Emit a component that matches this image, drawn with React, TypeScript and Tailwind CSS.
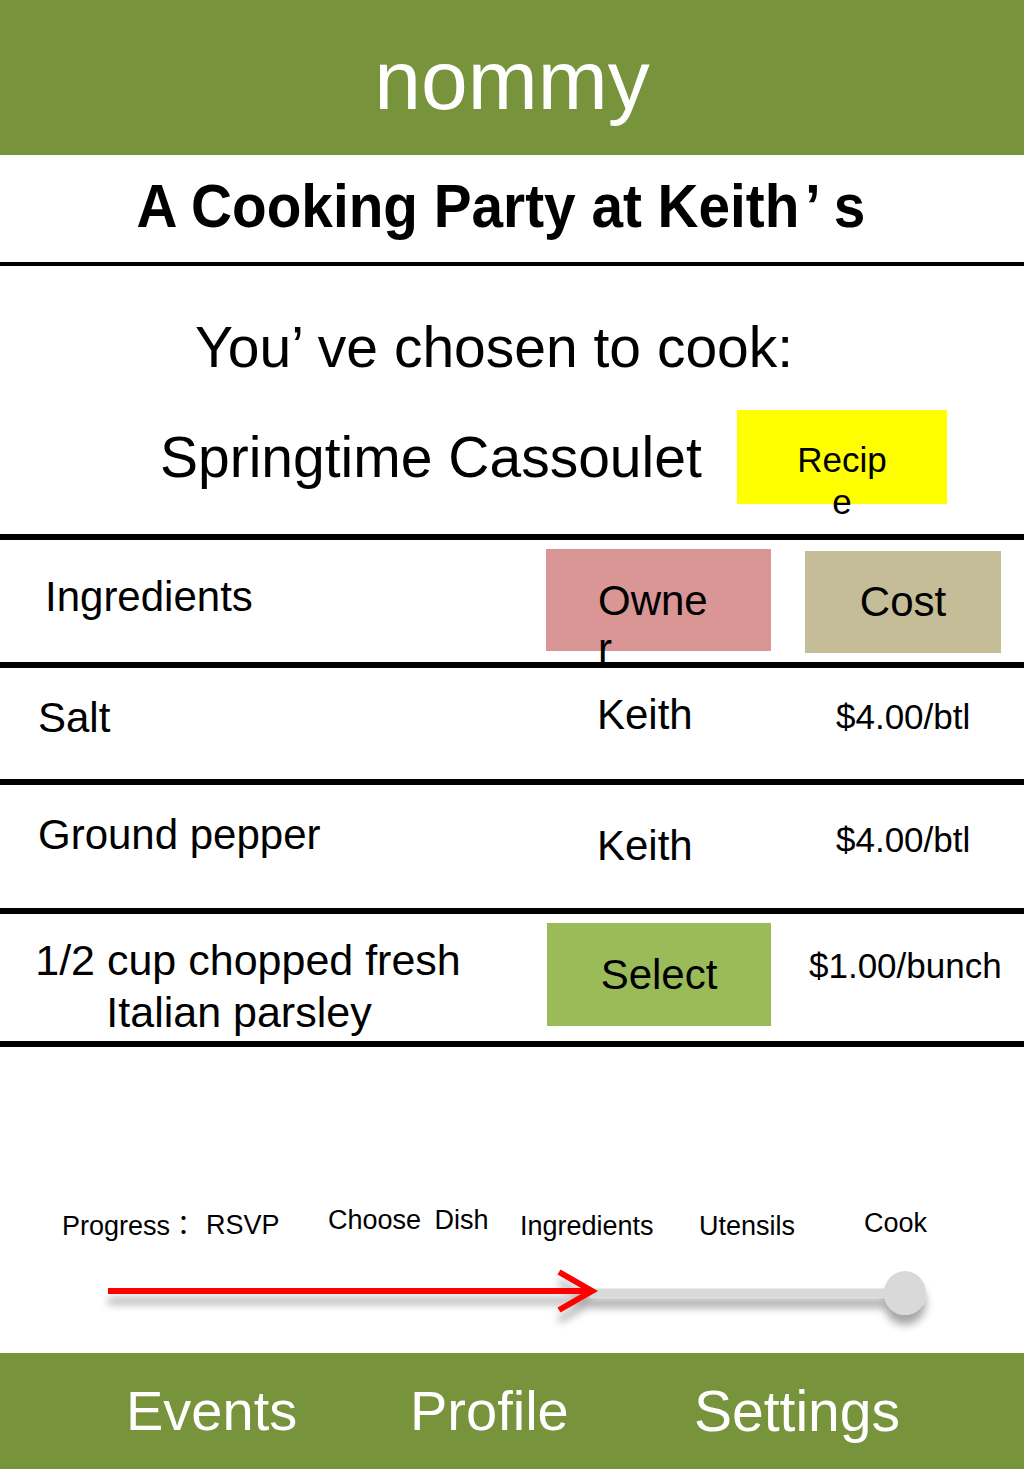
import React from 'react';

const FONT = "font-['Liberation_Sans','Noto_Sans_CJK_JP',Arial,sans-serif]";

const Divider: React.FC<{ thick?: boolean }> = ({ thick }) => (
  <div
    className={`relative z-10 bg-black shadow-[0_12px_10px_-3px_rgba(0,0,0,0.18)] ${thick ? 'h-[6px]' : 'h-[4px]'}`}
  />
);

const ROWS = [
  { name: 'Salt', owner: 'Keith', cost: '$4.00/btl', h: 'h-[111px]', namePt: 'pt-[26px]', ownerPt: 'pt-[23px]', costPt: 'pt-[29px]' },
  { name: 'Ground pepper', owner: 'Keith', cost: '$4.00/btl', h: 'h-[123px]', namePt: 'pt-[26px]', ownerPt: 'pt-[37px]', costPt: 'pt-[35px]' },
];

const STEPS = [
  { label: 'Progress：', w: 'w-[144px]', mt: 'mt-[6px]' },
  { label: 'RSVP', w: 'w-[122px]', mt: 'mt-[5px]' },
  { label: 'Choose\u2002Dish', w: 'w-[192px]', mt: 'mt-0' },
  { label: 'Ingredients', w: 'w-[179px]', mt: 'mt-[6px]' },
  { label: 'Utensils', w: 'w-[165px]', mt: 'mt-[6px]' },
  { label: 'Cook', w: 'w-auto', mt: 'mt-[3px]' },
];

export default function App() {
  return (
    <div className={`w-[1024px] h-[1469px] bg-white text-black overflow-hidden flex flex-col ${FONT}`}>
      {/* top bar */}
      <header className="h-[155px] bg-[#77933c] flex items-center justify-center pt-[4px]">
        <span className="text-white text-[84px] leading-none">nommy</span>
      </header>

      <section className="h-[107px] pt-[21px] flex justify-center pr-[22px]">
        <h1 className="text-[61px] leading-none font-bold scale-x-[0.93] whitespace-nowrap">
          A Cooking Party at Keith<span className="ml-[6px] mr-[14px]">’</span>s
        </h1>
      </section>
      <Divider />

      <section className="h-[268px] pt-[50px]">
        <p className="pl-[195px] text-[57px] leading-[62px] whitespace-nowrap">
          You<span className="mr-[14px]">’</span>ve chosen to cook:
        </p>
        <div className="mt-[32px] flex items-start">
          <div className="w-[737px] pl-[160px] pt-[16px] text-[57px] leading-[62px] whitespace-nowrap">
            Springtime Cassoulet
          </div>
          <div className="w-[210px] h-[94px] bg-[#ffff00] pt-[29px] text-center text-[35px] leading-[42px]">
            Recip
            <br />e
          </div>
        </div>
      </section>
      <Divider thick />

      {/* table header */}
      <div className="h-[122px] flex items-start">
        <div className="w-[546px] pl-[45px] pt-[33px] text-[42px] leading-[48px]">Ingredients</div>
        <div className="mt-[9px] w-[225px] h-[102px] bg-[#d99694] pl-[52px] pt-[28px] text-[42px] leading-[48px]">
          Owne
          <br />r
        </div>
        <div className="ml-[34px] mt-[11px] w-[196px] h-[102px] bg-[#c4bd97] flex items-center justify-center text-[42px] leading-[48px]">
          Cost
        </div>
      </div>
      <Divider thick />

      {ROWS.map((r) => (
        <React.Fragment key={r.name}>
          <div className={`${r.h} flex items-start`}>
            <div className={`w-[546px] pl-[38px] ${r.namePt} text-[42px] leading-[48px]`}>{r.name}</div>
            <div className={`w-[290px] pl-[51px] ${r.ownerPt} text-[42px] leading-[48px]`}>{r.owner}</div>
            <div className={`${r.costPt} text-[35px] leading-[40px]`}>{r.cost}</div>
          </div>
          <Divider thick />
        </React.Fragment>
      ))}

      <div className="h-[127px] flex items-start">
        <div className="w-[547px] pl-[28px]">
          <div className="w-[440px] pt-[20px] text-center text-[43px] leading-[52px] whitespace-nowrap">
            1/2 cup chopped fresh
            <br />
            <span className="mr-[18px]">Italian parsley</span>
          </div>
        </div>
        <div className="mt-[9px] w-[224px] h-[103px] bg-[#9bbb59] flex items-center justify-center text-[42px] leading-[48px]">
          Select
        </div>
        <div className="pl-[38px] pt-[32px] text-[35px] leading-[40px] whitespace-nowrap">$1.00/bunch</div>
      </div>
      <Divider thick />

      {/* progress */}
      <section className="h-[306px] pt-[157px]">
        <div className="flex items-start pl-[62px] text-[27px] leading-[32px]">
          {STEPS.map((s) => (
            <div key={s.label} className={`${s.w} ${s.mt} whitespace-nowrap`}>
              {s.label}
            </div>
          ))}
        </div>
        <svg width="1024" height="80" viewBox="0 0 1024 80" className="mt-[19px] block">
          <defs>
            <filter id="sh" x="-10%" y="-60%" width="120%" height="260%">
              <feGaussianBlur in="SourceAlpha" stdDeviation="4" />
              <feOffset dx="0" dy="10" result="b" />
              <feComponentTransfer>
                <feFuncA type="linear" slope="0.35" />
              </feComponentTransfer>
              <feMerge>
                <feMergeNode />
                <feMergeNode in="SourceGraphic" />
              </feMerge>
            </filter>
          </defs>
          <g filter="url(#sh)">
            <line x1="590" y1="32" x2="905" y2="32" stroke="#d9d9d9" strokeWidth="9" />
            <ellipse cx="905" cy="32" rx="21" ry="22" fill="#d9d9d9" />
            <line x1="108" y1="30" x2="590" y2="30" stroke="#ff0000" strokeWidth="6" />
            <polyline points="559,11 592,30 559,49" fill="none" stroke="#ff0000" strokeWidth="6" />
          </g>
        </svg>
      </section>

      <footer className="h-[116px] bg-[#77933c] flex items-center pl-[126px] text-white text-[56px] leading-none">
        <div className="w-[284px]">Events</div>
        <div className="w-[284px]">Profile</div>
        <div className="text-[57px]">Settings</div>
      </footer>
    </div>
  );
}
